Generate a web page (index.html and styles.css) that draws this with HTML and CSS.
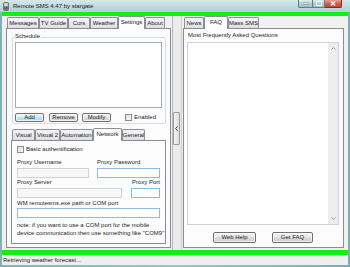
FILE: index.html
```html
<!DOCTYPE html>
<html>
<head>
<meta charset="utf-8">
<link rel="stylesheet" href="styles.css">
</head>
<body>
<div class="window">
  <div class="titlebar">
    <svg class="app-icon" width="6" height="9" viewBox="0 0 6 9"><rect x="0.5" y="0.5" width="5" height="8" rx="1" fill="#8a8f94" stroke="#50565c" stroke-width="0.6"/><rect x="1.3" y="1.3" width="3.4" height="2.6" fill="#d8e4e8"/><rect x="1.3" y="5" width="3.4" height="2.6" fill="#60666c"/></svg>
    <span class="title">Remote SMS 4.47 by stargate</span>
    <div class="caption">
      <div class="cbtn cmin"><svg width="6" height="3" viewBox="0 0 6 3"><rect x="0" y="1" width="6" height="1.4" fill="#fff" stroke="#4a5a60" stroke-width="0.4"/></svg></div>
      <div class="cbtn cmax"><svg width="6" height="5" viewBox="0 0 6 5"><rect x="0.5" y="0.5" width="5" height="4" fill="none" stroke="#fff" stroke-width="1"/></svg></div>
      <div class="cbtn cclose"><svg width="6" height="5" viewBox="0 0 6 5"><path d="M0.8 0.5 L5.2 4.5 M5.2 0.5 L0.8 4.5" stroke="#fff" stroke-width="1.2"/></svg></div>
    </div>
  </div>
  <div class="client">
    <div class="green green-top"></div>
    <div class="main">
      <div class="tabctl left">
        <div class="tabs">
          <div class="tab w-messages">Messages</div>
          <div class="tab w-tvguide">TV Guide</div>
          <div class="tab w-curs">Curs</div>
          <div class="tab w-weather">Weather</div>
          <div class="tab sel w-settings">Settings</div>
          <div class="tab w-about">About</div>
        </div>
        <div class="page">
          <div class="group">
            <span class="legend">Schedule</span>
            <div class="listbox"></div>
            <div class="btnrow">
              <div class="btn def w-add">Add</div>
              <div class="btn w-remove">Remove</div>
              <div class="btn w-modify">Modify</div>
              <div class="check enabled-check"></div>
              <span class="check-label">Enabled</span>
            </div>
          </div>
          <div class="tabctl inner">
            <div class="tabs">
              <div class="tab w-visual">Visual</div>
              <div class="tab w-visual2">Visual 2</div>
              <div class="tab w-automation">Automation</div>
              <div class="tab sel w-network">Network</div>
              <div class="tab w-general">General</div>
            </div>
            <div class="page inner-page">
              <div class="row auth-row">
                <div class="check"></div>
                <span class="check-label">Basic authentification</span>
              </div>
              <div class="row label-row">
                <span class="lbl w-user">Proxy Username</span>
                <span class="lbl">Proxy Password</span>
              </div>
              <div class="row input-row">
                <div class="input gray w-userbox"></div>
                <div class="input blue w-passbox"></div>
              </div>
              <div class="row label-row2">
                <span class="lbl">Proxy Server</span>
                <span class="lbl port-lbl">Proxy Port</span>
              </div>
              <div class="row input-row2">
                <div class="input gray w-serverbox"></div>
                <div class="input blue w-portbox"></div>
              </div>
              <div class="row label-row3">
                <span class="lbl">WM remotesms.exe path or COM port</span>
              </div>
              <div class="row input-row3">
                <div class="input blue w-wmbox"></div>
              </div>
              <p class="note">note: if you want to use a COM port for the mobile<br>device communication then use something like "COM9"</p>
            </div>
          </div>
        </div>
      </div>
      <div class="splitter">
        <div class="split-btn"><svg width="3" height="5" viewBox="0 0 3 5"><path d="M2.6 0.4 L0.6 2.5 L2.6 4.6" fill="none" stroke="#333" stroke-width="0.9"/></svg></div>
      </div>
      <div class="tabctl right">
        <div class="tabs">
          <div class="tab w-news">News</div>
          <div class="tab sel w-faq">FAQ</div>
          <div class="tab w-mass">Mass SMS</div>
        </div>
        <div class="page">
          <div class="faq-label">Most Frequently Asked Questions</div>
          <div class="faqbox">
            <div class="faq-text"></div>
            <div class="vscroll">
              <svg width="5" height="3" viewBox="0 0 5 3"><path d="M0.5 2.6 L2.5 0.6 L4.5 2.6" fill="none" stroke="#8a8a8a" stroke-width="0.8"/></svg>
              <svg width="5" height="3" viewBox="0 0 5 3"><path d="M0.5 0.4 L2.5 2.4 L4.5 0.4" fill="none" stroke="#8a8a8a" stroke-width="0.8"/></svg>
            </div>
          </div>
          <div class="faq-btns">
            <div class="btn w-webhelp">Web Help</div>
            <div class="btn w-getfaq">Get FAQ</div>
          </div>
        </div>
      </div>
    </div>
    <div class="green green-bottom"></div>
    <div class="status">Retrieving weather forecast...</div>
  </div>
</div>
</body>
</html>
```

FILE: styles.css
```css
* { box-sizing: border-box; margin: 0; padding: 0; }
html, body { width: 350px; height: 267px; overflow: hidden; }
body {
  font-family: "Liberation Sans", Arial, sans-serif;
  font-size: 6px;
  color: #1e1e1e;
  background: #7eb2b8;
}
.window {
  width: 350px;
  height: 267px;
  display: flex;
  flex-direction: column;
  background: linear-gradient(90deg, #7fb2b8, #9ac6cb 50%, #7aaeb4);
}
.titlebar {
  height: 12px;
  display: flex;
  align-items: center;
  background: linear-gradient(180deg, #d6e8ea, #bcd9dc 60%, #b1d2d6);
}
.app-icon { margin-left: 3px; flex: none; }
.title { margin-left: 4px; font-size: 6px; color: #1a1a1a; line-height: 8px; }
.caption {
  margin-left: auto;
  margin-right: 8px;
  align-self: flex-start;
  display: flex;
  height: 8px;
}
.cbtn {
  height: 8px;
  display: flex;
  align-items: center;
  justify-content: center;
  border: 1px solid #5f7f86;
  border-top: none;
}
.cmin { width: 14px; border-radius: 0 0 0 2px; background: linear-gradient(180deg, #dfeef0, #b4cdd2 50%, #a3bfc5); border-right: none; }
.cmax { width: 13px; background: linear-gradient(180deg, #dfeef0, #b4cdd2 50%, #a3bfc5); }
.cclose { width: 17px; border-left: none; border-radius: 0 0 2px 0; border-color: #7d2e26; background: linear-gradient(180deg, #e9a090, #d0604c 50%, #c2402c); }

.client {
  flex: 1;
  margin: 0 2px 2px;
  background: #f0f0f0;
  display: flex;
  flex-direction: column;
}
.green { background: #12f012; }
.green-top { height: 4px; }
.green-bottom { height: 5px; }
.main {
  height: 234px;
  display: flex;
  padding: 0 4px;
}
.tabctl { display: flex; flex-direction: column; }
.tabctl.left { width: 165px; margin-right: 1px; }
.tabctl.right { width: 161px; }
.tabs {
  height: 12px;
  display: flex;
  align-items: flex-end;
  padding-left: 1px;
}
.tab {
  height: 11px;
  border: 1px solid #8c8f96;
  border-bottom: none;
  border-radius: 2px 2px 0 0;
  background: linear-gradient(180deg, #f4f4f4, #ebebeb 50%, #dedede);
  display: flex;
  align-items: center;
  justify-content: center;
  white-space: nowrap;
  color: #1a1a1a;
  line-height: 7px;
}
.tab.sel {
  height: 13px;
  margin-bottom: -1px;
  background: #fcfcfc;
  position: relative;
  z-index: 1;
  padding-bottom: 2px;
}
.page {
  height: 220px;
  border: 1px solid #898c95;
  background: #fcfcfc;
}
.w-messages { width: 32px; }
.w-tvguide { width: 29px; }
.w-curs { width: 22px; }
.w-weather { width: 28px; }
.w-settings { width: 27px; }
.w-about { width: 20px; }
.w-visual { width: 23px; }
.w-visual2 { width: 25px; }
.w-automation { width: 33px; }
.w-network { width: 29px; }
.w-general { width: 23px; }
.w-news { width: 20px; }
.w-faq { width: 24px; }
.w-mass { width: 31px; }

.group {
  margin: 8px 0 0 5px;
  width: 154px;
  height: 87px;
  border: 1px solid #d5dfe5;
  border-radius: 2px;
  position: relative;
  padding: 4px 0 0 2px;
}
.legend {
  position: absolute;
  top: -5px;
  left: 1px;
  padding: 0 1px;
  line-height: 7px;
  background: #fcfcfc;
}
.listbox {
  width: 147px;
  height: 66px;
  border: 1px solid #a5acb5;
  background: #fff;
}
.btnrow {
  margin-top: 5px;
  height: 9px;
  display: flex;
  align-items: center;
}
.btn {
  height: 9px;
  border: 1px solid #707070;
  border-radius: 2px;
  background: linear-gradient(180deg, #f2f2f2, #ebebeb 45%, #dddddd 50%, #cfcfcf);
  display: flex;
  align-items: center;
  justify-content: center;
  white-space: nowrap;
  line-height: 7px;
  color: #1a1a1a;
  box-shadow: inset 0 0 0 1px rgba(255,255,255,0.7);
}
.btn.def {
  border-color: #3c7fb1;
  background: linear-gradient(180deg, #eaf6fd, #d9f0fc 45%, #bee6fd 50%, #a7d9f5);
}
.w-add { width: 29px; margin-right: 5px; }
.w-remove { width: 29px; margin-right: 4px; }
.w-modify { width: 29px; }
.check {
  width: 7px;
  height: 7px;
  border: 1px solid #8e8f8f;
  background: linear-gradient(135deg, #dcdcdc, #f6f6f6);
  flex: none;
}
.enabled-check { margin-left: 14px; }
.check-label { margin-left: 2px; line-height: 7px; }

.tabctl.inner { margin: 4px 0 0 4px; width: 155px; }
.inner-page {
  height: 104px;
  padding: 0 0 0 5px;
}
.row { display: flex; align-items: center; }
.auth-row { margin-top: 5px; height: 7px; }
.lbl { line-height: 7px; white-space: nowrap; }
.label-row { margin-top: 6px; height: 7px; }
.w-user { width: 80px; }
.input-row { margin-top: 2px; height: 10px; }
.label-row2 { margin-top: 1px; height: 7px; width: 143px; justify-content: space-between; }
.input-row2 { margin-top: 2px; height: 10px; }
.label-row3 { margin-top: 2px; height: 7px; }
.input-row3 { margin-top: 1px; height: 10px; }
.input { height: 10px; background: #fff; border: 1px solid #c3c6cb; }
.input.gray { background: #f7f7f7; border-color: #cfd1d4; }
.input.blue { border-color: #8fbbe3; }
.w-userbox { width: 72px; margin-right: 8px; }
.w-passbox { width: 63px; }
.w-serverbox { width: 105px; margin-right: 9px; }
.w-portbox { width: 29px; }
.w-wmbox { width: 143px; }
.note { margin-top: 3px; line-height: 8px; white-space: nowrap; }

.splitter {
  width: 10px;
  margin-right: 1px;
  border-left: 1px solid #b9b9b9;
  border-right: 1px solid #cfcfcf;
  background: #ebebeb;
  padding-top: 96px;
}
.split-btn {
  width: 7px;
  height: 33px;
  border: 1px solid #9c9c9c;
  border-radius: 1px;
  background: linear-gradient(90deg, #f4f4f4, #dcdcdc);
  display: flex;
  align-items: center;
  justify-content: center;
}

.faq-label { margin: 3px 0 0 4px; line-height: 7px; white-space: nowrap; }
.faqbox {
  margin: 3px 0 0 3px;
  width: 152px;
  height: 183px;
  border: 1px solid #d0d3d8;
  background: #fff;
  display: flex;
}
.faq-text { flex: 1; }
.vscroll {
  width: 10px;
  background: #ededed;
  display: flex;
  flex-direction: column;
  justify-content: space-between;
  align-items: center;
  padding: 4px 0 4px;
}
.faq-btns {
  margin-top: 7px;
  padding-left: 29px;
  display: flex;
}
.faq-btns .btn { height: 11px; }
.w-webhelp { width: 43px; margin-right: 16px; }
.w-getfaq { width: 41px; }

.status {
  height: 10px;
  line-height: 10px;
  padding-left: 1px;
  background: #f1eeee;
  color: #1a1a1a;
  white-space: nowrap;
}
```
